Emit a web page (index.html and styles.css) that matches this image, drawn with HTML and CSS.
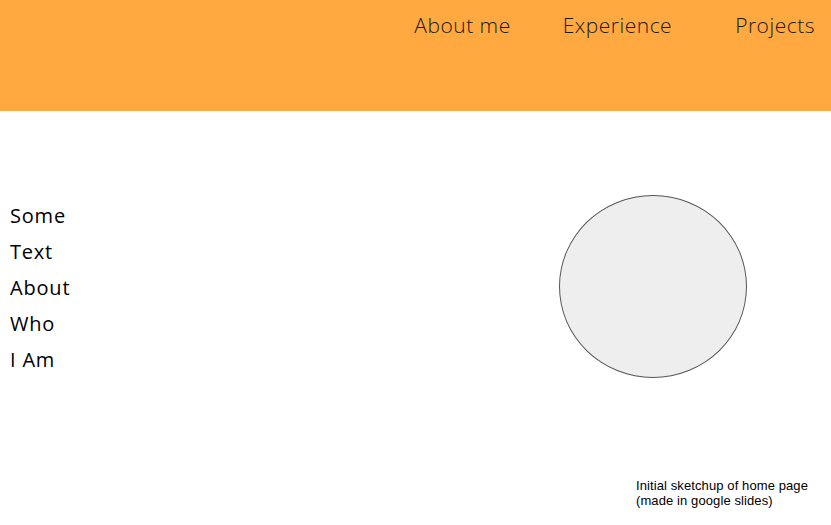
FILE: index.html
```html
<!DOCTYPE html>
<html>
<head>
<meta charset="utf-8">
<link rel="stylesheet" href="styles.css">
</head>
<body>
<header class="topbar">
  <nav class="nav">
    <a class="nav-link nav-about">About me</a>
    <a class="nav-link nav-exp">Experience</a>
    <a class="nav-link nav-proj">Projects</a>
  </nav>
</header>
<main class="hero">
  <div class="intro">
    <p class="intro-line">Some</p>
    <p class="intro-line">Text</p>
    <p class="intro-line">About</p>
    <p class="intro-line">Who</p>
    <p class="intro-line">I Am</p>
  </div>
  <div class="portrait"></div>
</main>
<footer class="note">
  <p class="note-text">Initial sketchup of home page<br>(made in google slides)</p>
</footer>
</body>
</html>
```

FILE: styles.css
```css
html, body {
  margin: 0;
  padding: 0;
  background: #ffffff;
}
body {
  width: 831px;
  height: 525px;
  overflow: hidden;
  font-family: "Open Sans", "Liberation Sans", sans-serif;
}
.topbar {
  height: 111px;
  background: #ffa940;
  display: flex;
  justify-content: flex-end;
  align-items: flex-start;
}
.nav {
  display: flex;
  padding-top: 11px;
  padding-right: 16px;
}
.nav-link {
  font-size: 21px;
  font-weight: 300;
  letter-spacing: 0.5px;
  color: #1a1a1a;
  line-height: 28px;
}
.nav-exp { margin-left: 52px; }
.nav-proj { margin-left: 63px; }
.hero {
  display: flex;
  height: 350px;
}
.intro {
  padding-left: 10px;
  padding-top: 87px;
  width: 549px;
}
.intro-line {
  margin: 0;
  font-size: 20px;
  letter-spacing: 0.8px;
  line-height: 36px;
  color: #000;
}
.portrait {
  margin-top: 84px;
  width: 186px;
  height: 181px;
  border: 1px solid #555;
  border-radius: 50%;
  background: #eeeeee;
}
.note {
  padding-left: 636px;
  padding-top: 17px;
}
.note-text {
  margin: 0;
  font-family: "Liberation Sans", Arial, sans-serif;
  font-size: 13px;
  letter-spacing: 0.1px;
  line-height: 15px;
  color: #000;
}
```
